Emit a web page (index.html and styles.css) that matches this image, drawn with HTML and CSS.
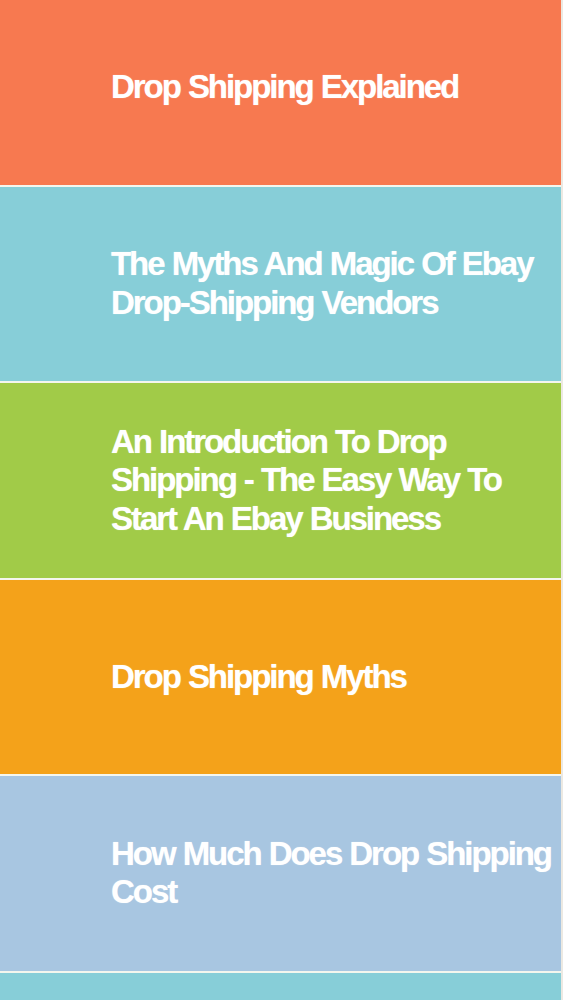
FILE: index.html
```html
<!DOCTYPE html>
<html lang="en">
<head>
<meta charset="utf-8">
<title>Drop Shipping</title>
<link rel="stylesheet" href="styles.css">
</head>
<body>
<ul class="topics">
  <li class="topic topic-coral"><span class="topic-title">Drop Shipping Explained</span></li>
  <li class="topic topic-teal"><span class="topic-title">The Myths And Magic Of Ebay Drop-Shipping Vendors</span></li>
  <li class="topic topic-green"><span class="topic-title">An Introduction To Drop Shipping - The Easy Way To Start An Ebay Business</span></li>
  <li class="topic topic-orange"><span class="topic-title">Drop Shipping Myths</span></li>
  <li class="topic topic-blue"><span class="topic-title">How Much Does Drop Shipping Cost</span></li>
  <li class="topic topic-teal"></li>
</ul>
</body>
</html>
```
FILE: styles.css
```css
html, body {
  margin: 0;
  padding: 0;
}
body {
  background: #ece9e2;
  overflow: hidden;
  height: 1000px;
}
.topics {
  list-style: none;
  margin: -10px 0 0 0;
  padding: 0;
  width: 561px;
  background: #f4f6ee;
  display: flex;
  flex-direction: column;
  gap: 2px;
}
.topic {
  height: 194.5px;
  box-sizing: border-box;
  display: flex;
  align-items: center;
  padding: 0 4px 0 111px;
}
.topic-title {
  font-family: "Liberation Sans", Arial, sans-serif;
  font-weight: bold;
  font-size: 33px;
  letter-spacing: -2.05px;
  word-spacing: 1px;
  line-height: 38.5px;
  color: #ffffff;
  text-shadow: 0 0 1px rgba(255,255,255,0.6);
}
.topic-coral { background: #f77950; }
.topic-teal { background: #87ced8; }
.topic-green { background: #a1cb48; }
.topic-orange { background: #f4a21a; }
.topic-blue { background: #a8c6e1; }
```
